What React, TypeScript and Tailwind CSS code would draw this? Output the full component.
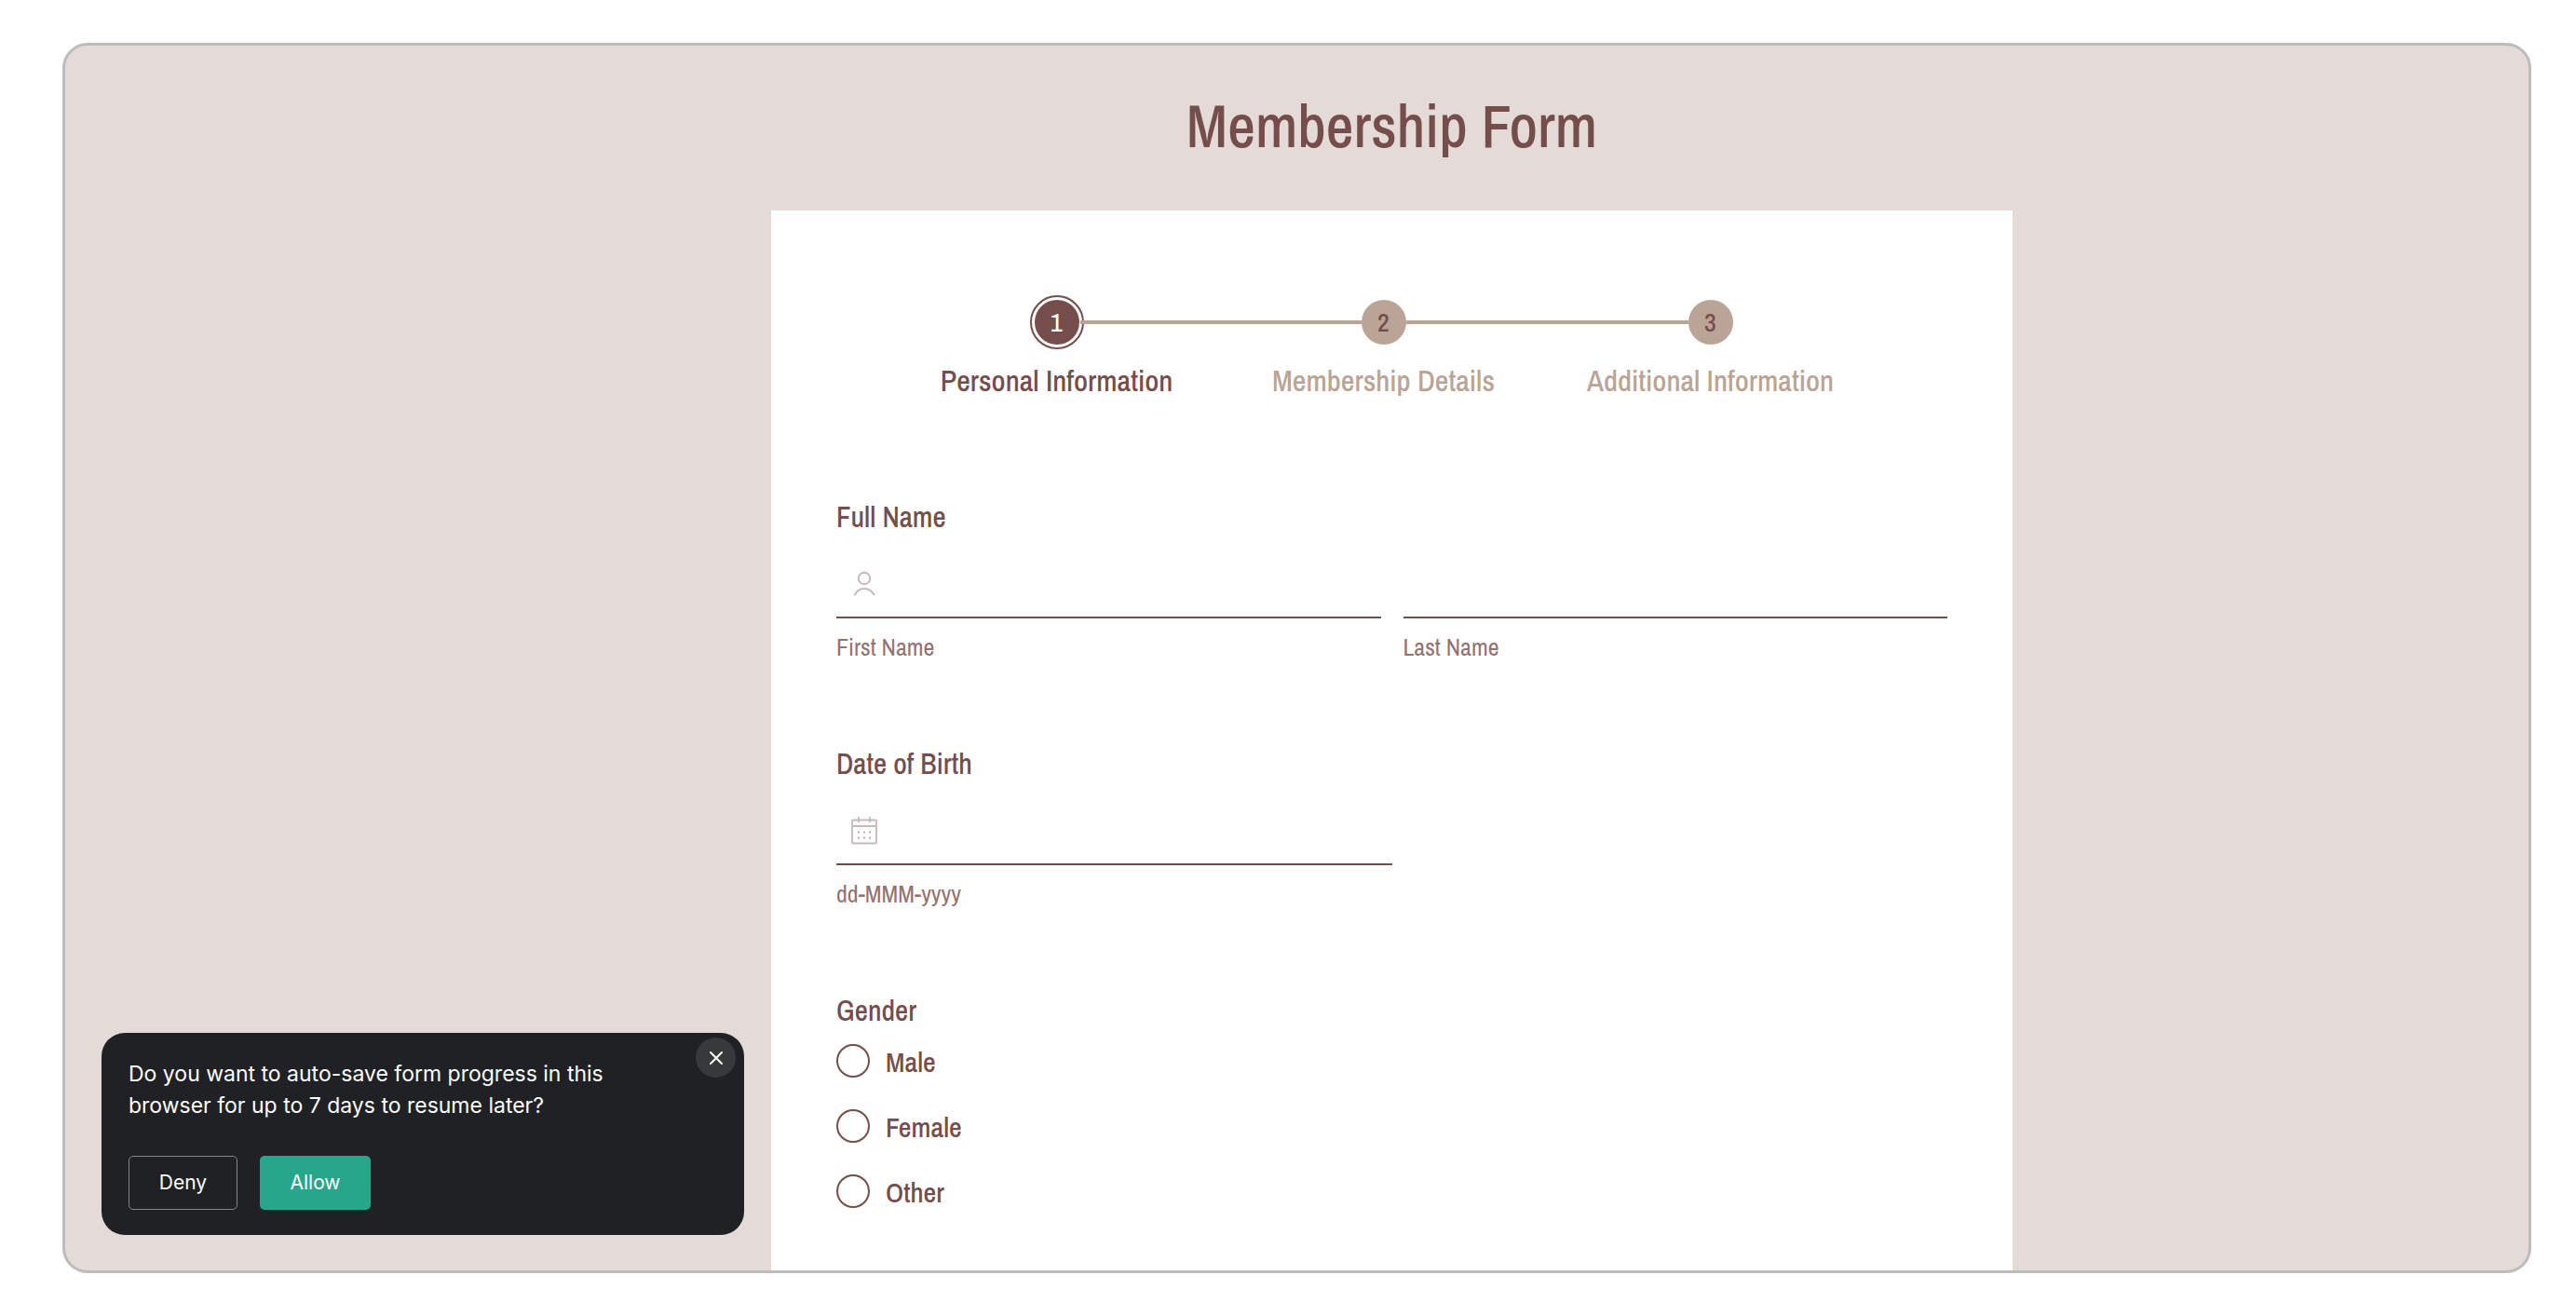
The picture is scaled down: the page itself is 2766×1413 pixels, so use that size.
import React from 'react';

interface Step {
  id: number;
  label: string;
}

const steps: Step[] = [
  { id: 1, label: 'Personal Information' },
  { id: 2, label: 'Membership Details' },
  { id: 3, label: 'Additional Information' },
];

const genders = ['Male', 'Female', 'Other'];

function UserIcon() {
  return (
    <svg className="h-8 w-8 shrink-0 text-[#c8b8b7]" viewBox="0 0 32 32" fill="none" stroke="currentColor" strokeWidth="2" strokeLinecap="round" aria-hidden="true">
      <circle cx="16" cy="11" r="6.2" />
      <path d="M6 28.5c2-4 6-6.500 10-6.500s8 2.500 10.500 6.500" />
    </svg>
  );
}

function CalendarIcon() {
  return (
    <svg className="h-8 w-8 shrink-0 text-[#c8b8b7]" viewBox="0 0 32 32" fill="none" stroke="currentColor" strokeWidth="1.8" aria-hidden="true">
      <rect x="3" y="5.500" width="26" height="25" rx="1" />
      <path d="M3 12h26M10 2v6M22 2v6" />
      <path d="M9 18.500h2M15 18.500h2M21 18.500h2M9 24.500h2M15 24.500h2M21 24.500h2" strokeWidth="2.400" />
    </svg>
  );
}

function Stepper({ current }: { current: number }) {
  return (
    <ol className="ml-[61px] mr-[79px] flex font-medium">
      {steps.map((step, index) => {
        const isCurrent = step.id === current;
        return (
          <li key={step.id} className="flex flex-1 flex-col items-center gap-2">
            <div className="flex w-full items-center">
              <span className={index === 0 ? 'h-1 flex-1' : 'h-1 flex-1 bg-[#baa496]'} />
              {isCurrent ? (
                <span className="-mx-1 flex h-[58px] w-[58px] items-center justify-center rounded-full border-2 border-[#754d4b]">
                  <span className="flex h-12 w-12 items-center justify-center rounded-full bg-[#754d4b] text-[28px] text-white">
                    {step.id}
                  </span>
                </span>
              ) : (
                <span className="my-[5px] flex h-12 w-12 items-center justify-center rounded-full bg-[#baa496] text-[28px] text-[#754d4b]">
                  {step.id}
                </span>
              )}
              <span className={index === steps.length - 1 ? 'h-1 flex-1' : 'h-1 flex-1 bg-[#baa496]'} />
            </div>
            <span
              className={
                isCurrent
                  ? 'text-[32px] leading-[52px] whitespace-nowrap text-[#754d4b]'
                  : 'text-[32px] leading-[52px] whitespace-nowrap text-[#baa496]'
              }
            >
              {step.label}
            </span>
          </li>
        );
      })}
    </ol>
  );
}

interface TextFieldProps {
  id: string;
  hint: string;
  icon?: React.ReactNode;
}

function TextField({ id, hint, icon }: TextFieldProps) {
  return (
    <div className="flex flex-col gap-3">
      <div className="flex h-[76px] items-center gap-4 border-b-2 border-[#754d4b] pt-[2px] pl-[14px]">
        {icon}
        <input id={id} type="text" className="h-full w-full min-w-0 bg-transparent text-[30px] outline-none" />
      </div>
      <label htmlFor={id} className="text-[26px] leading-[38px] text-[#947270]">
        {hint}
      </label>
    </div>
  );
}

function AutoSavePrompt() {
  return (
    <div
      role="dialog"
      aria-label="Auto-save"
      className="absolute bottom-[38px] left-[39px] flex h-[217px] w-[690px] flex-col justify-between rounded-[25px] bg-[#202124] px-[29px] pt-[27px] pb-[27px] font-['Inter',sans-serif] font-normal text-white"
    >
      <button
        type="button"
        aria-label="Close"
        className="absolute top-[5px] right-[9px] flex h-[43px] w-[43px] items-center justify-center rounded-full bg-[#38393b]"
      >
        <svg className="h-[14px] w-[14px]" viewBox="0 0 14 14" stroke="currentColor" strokeWidth="2" strokeLinecap="round">
          <path d="M1 1l12 12M13 1L1 13" />
        </svg>
      </button>
      <p className="text-[23px] leading-[34px]">
        Do you want to auto-save form progress in this
        <br />
        browser for up to 7 days to resume later?
      </p>
      <div className="flex gap-6">
        <button type="button" className="h-[58px] w-[117px] rounded-[5px] border border-[#85868a] text-[21px]">
          Deny
        </button>
        <button type="button" className="h-[58px] w-[119px] rounded-[5px] bg-[#26a68a] text-[21px]">
          Allow
        </button>
      </div>
    </div>
  );
}

export default function App() {
  return (
    <div className="h-screen bg-white py-[46px] pr-12 pl-[67px] font-['Archivo_Narrow','Roboto_Condensed','Open_Sans_Condensed','DejaVu_Sans_Condensed',sans-serif] text-[#754d4b]">
      <main className="relative flex h-full flex-col items-center overflow-hidden rounded-[27px] border-[3px] border-[#babcbe] bg-[#e4dad7] pl-[204px]">
        <h1 className="shrink-0 pt-[46px] pb-[51px] text-[65px] leading-[80px] font-medium">Membership Form</h1>
        <form className="flex w-full max-w-[1333px] shrink-0 flex-col bg-white px-[70px] pt-[91px] pb-[120px]">
          <Stepper current={1} />

          <fieldset className="mt-[100px] h-[265px]">
            <legend className="text-[31px] leading-10 font-medium">Full Name</legend>
            <div className="mt-[13px] grid grid-cols-2 gap-6">
              <TextField id="first-name" hint="First Name" icon={<UserIcon />} />
              <TextField id="last-name" hint="Last Name" />
            </div>
          </fieldset>

          <fieldset className="h-[265px]">
            <legend className="text-[31px] leading-10 font-medium">Date of Birth</legend>
            <div className="mt-[13px] w-1/2">
              <TextField id="birth-date" hint="dd-MMM-yyyy" icon={<CalendarIcon />} />
            </div>
          </fieldset>

          <fieldset>
            <legend className="text-[31px] leading-10 font-medium">Gender</legend>
            <div className="mt-4 flex flex-col gap-8">
              {genders.map((gender) => (
                <label key={gender} className="flex items-start gap-[17px] text-[30px] leading-[38px] font-medium">
                  <input
                    type="radio"
                    name="gender"
                    value={gender}
                    className="h-9 w-9 shrink-0 appearance-none rounded-full border-2 border-[#754d4b] checked:border-[10px]"
                  />
                  {gender}
                </label>
              ))}
            </div>
          </fieldset>
        </form>
        <AutoSavePrompt />
      </main>
    </div>
  );
}
